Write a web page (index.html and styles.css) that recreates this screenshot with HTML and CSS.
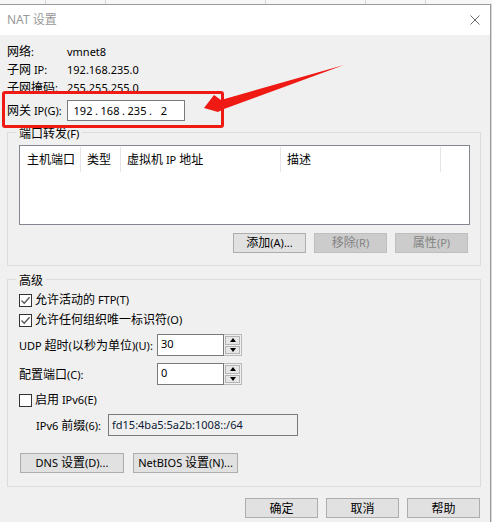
FILE: index.html
```html
<!DOCTYPE html>
<html lang="zh-CN">
<head>
<meta charset="utf-8">
<title>NAT 设置</title>
<link rel="stylesheet" href="styles.css">
</head>
<body>
<div class="screen">
  <div class="topstrip">
    <div class="ts-gap"></div>
    <div class="ts-cell w60"></div>
    <div class="ts-cell w160"></div>
    <div class="ts-cell w100"></div>
    <div class="ts-cell w60"></div>
    <div class="ts-cell rest"></div>
  </div>
  <div class="main">
    <div class="dialog">
      <div class="titlebar">
        <span class="title">NAT 设置</span>
        <svg class="close" width="10" height="10" viewBox="0 0 10 10"><path d="M0.5 0.5L9.5 9.5M9.5 0.5L0.5 9.5" stroke="#6d6d6d" stroke-width="1" fill="none"/></svg>
      </div>
      <div class="body">
        <div class="info">
          <span><span class="z">网络</span>:</span><span>vmnet8</span>
          <span><span class="z">子网</span> IP:</span><span>192.168.235.0</span>
          <span><span class="z">子网掩码</span>:</span><span>255.255.255.0</span>
        </div>
        <div class="gwrow">
          <span class="gwlabel"><span class="z">网关</span> IP(G):</span>
          <div class="ipbox">
            <span class="oct">192</span><span class="dot">.</span><span class="oct">168</span><span class="dot">.</span><span class="oct">235</span><span class="dot">.</span><span class="oct">2</span>
          </div>
        </div>

        <div class="group g1">
          <span class="gtitle"><span class="z">端口转发</span>(F)</span>
          <div class="listview">
            <div class="lvhead">
              <span class="col c1"><span class="z">主机端口</span></span>
              <span class="col c2"><span class="z">类型</span></span>
              <span class="col c3"><span class="z">虚拟机</span> IP <span class="z">地址</span></span>
              <span class="col c4"><span class="z">描述</span></span>
            </div>
          </div>
          <div class="btnrow">
            <span class="btn"><span><span class="z">添加</span>(A)...</span></span>
            <span class="btn disabled"><span><span class="z">移除</span>(R)</span></span>
            <span class="btn disabled"><span><span class="z">属性</span>(P)</span></span>
          </div>
        </div>

        <div class="group g2">
          <span class="gtitle"><span class="z">高级</span></span>
          <div class="checkrow first">
            <span class="cb"><svg width="11" height="11" viewBox="0 0 11 11"><path d="M1.5 5.5L4.2 8.2L9.6 2.2" stroke="#555" stroke-width="1.3" fill="none"/></svg></span>
            <span><span class="z">允许活动的</span> FTP(T)</span>
          </div>
          <div class="checkrow">
            <span class="cb"><svg width="11" height="11" viewBox="0 0 11 11"><path d="M1.5 5.5L4.2 8.2L9.6 2.2" stroke="#555" stroke-width="1.3" fill="none"/></svg></span>
            <span><span class="z">允许任何组织唯一标识符</span>(O)</span>
          </div>
          <div class="fieldrow udp">
            <span class="flabel">UDP <span class="z">超时</span>(<span class="z">以秒为单位</span>)(U):</span>
            <div class="spin">
              <span class="spintext">30</span>
              <span class="spinbtns"><span class="sb"><i class="up"></i></span><span class="sb"><i class="down"></i></span></span>
            </div>
          </div>
          <div class="fieldrow cfg">
            <span class="flabel"><span class="z">配置端口</span>(C):</span>
            <div class="spin">
              <span class="spintext">0</span>
              <span class="spinbtns"><span class="sb"><i class="up"></i></span><span class="sb"><i class="down"></i></span></span>
            </div>
          </div>
          <div class="checkrow v6">
            <span class="cb"></span>
            <span><span class="z">启用</span> IPv6(E)</span>
          </div>
          <div class="fieldrow prefix">
            <span class="plabel">IPv6 <span class="z">前缀</span>(6):</span>
            <span class="pinput">fd15:4ba5:5a2b:1008::/64</span>
          </div>
          <div class="btnrow2">
            <span class="btn dns"><span>DNS <span class="z">设置</span>(D)...</span></span>
            <span class="btn nb"><span>NetBIOS <span class="z">设置</span>(N)...</span></span>
          </div>
        </div>

        <div class="footer">
          <span class="btn"><span class="z">确定</span></span>
          <span class="btn"><span class="z">取消</span></span>
          <span class="btn"><span class="z">帮助</span></span>
        </div>
      </div>
    </div>
    <div class="side"></div>
  </div>

  <div class="redbox"></div>
  <svg class="arrow" width="492" height="522" viewBox="0 0 492 522">
    <polygon points="204,108 214,95 221,100 344,65 224,109 218,112" fill="#f01a14"/>
  </svg>
</div>
</body>
</html>
```
FILE: styles.css
```css
* { box-sizing: border-box; }
html, body {
  margin: 0;
  padding: 0;
  width: 492px;
  height: 522px;
  overflow: hidden;
  background: #f0f0f0;
}
body {
  font-family: "Noto Sans", "Noto Sans CJK SC", sans-serif;
  font-size: 11px;
  color: #000;
}
.z {
  font-family: "Noto Sans CJK SC", sans-serif;
  font-size: 12px;
  line-height: 1;
}
.screen {
  position: relative;
  width: 492px;
  height: 522px;
  overflow: hidden;
}
.topstrip {
  display: flex;
  height: 4px;
  background: #f7f7f7;
}
.ts-gap { width: 45px; }
.ts-cell { border-left: 1px solid #d6d6d6; }
.w60 { width: 60px; }
.w160 { width: 160px; }
.w100 { width: 100px; }
.rest { flex: 1; }

.main { display: flex; }
.dialog {
  width: 491px;
  border-top: 1px solid #9a9a9a;
  border-right: 1px solid #9a9a9a;
  background: #f0f0f0;
  height: 518px;
}
.side {
  width: 1px;
  background: #d9d9d9;
}
.titlebar {
  height: 30px;
  background: #fff;
  display: flex;
  align-items: center;
  justify-content: space-between;
  padding: 0 10px 0 7px;
}
.title {
  font-size: 12px;
  color: #999;
  line-height: 16px;
}
.close { display: block; }

.body {
  padding: 8px 9px 0 7px;
  display: flex;
  flex-direction: column;
}
.info {
  display: grid;
  grid-template-columns: 60px auto;
  grid-auto-rows: 18px;
  line-height: 18px;
}
.gwrow {
  display: flex;
  align-items: center;
  margin-top: 3px;
  height: 21px;
}
.gwlabel { width: 60px; white-space: nowrap; }
.ipbox {
  width: 118px;
  height: 21px;
  border: 1px solid #7a7a7a;
  background: #fff;
  display: flex;
  align-items: center;
  padding-left: 5px;
  line-height: 19px;
}
.oct { width: 20px; text-align: center; }
.dot { width: 7px; text-align: center; }

.group {
  border: 1px solid #dcdcdc;
  display: flex;
  flex-direction: column;
  padding: 0 10px 0 11px;
}
.gtitle {
  align-self: flex-start;
  margin: -6px 0 0 -3px;
  padding: 0 3px;
  height: 14px;
  line-height: 14px;
  background: #f0f0f0;
}
.g1 {
  margin-top: 11px;
  padding-bottom: 12px;
}
.listview {
  margin-top: 4px;
  height: 80px;
  border: 1px solid #828790;
  background: #fff;
}
.lvhead { display: flex; height: 27px; }
.col {
  margin-top: 1px;
  height: 25px;
  line-height: 25px;
  border-right: 1px solid #e5e5e5;
  padding-left: 6px;
  white-space: nowrap;
}
.c1 { width: 61px; padding-left: 7px; }
.c2 { width: 40px; }
.c3 { width: 160px; }
.c4 { width: 160px; }
.btnrow {
  display: flex;
  justify-content: flex-end;
  gap: 8px;
  margin-top: 8px;
  padding-right: 2px;
}
.btn {
  width: 73px;
  height: 20px;
  border: 1px solid #adadad;
  background: #e1e1e1;
  display: flex;
  align-items: center;
  justify-content: center;
  line-height: 18px;
  white-space: nowrap;
}
.btn.disabled {
  background: #cccccc;
  border-color: #bfbfbf;
  color: #838383;
}

.g2 {
  margin-top: 13px;
  padding-bottom: 13px;
}
.checkrow {
  display: flex;
  align-items: center;
  gap: 3px;
  height: 20px;
  line-height: 16px;
}
.checkrow.first { margin-top: 2px; }
.cb {
  width: 13px;
  height: 13px;
  border: 1px solid #333;
  background: #fff;
  display: flex;
}
.cb svg { display: block; }
.fieldrow {
  display: flex;
  align-items: center;
  height: 22px;
}
.udp { margin-top: 4px; }
.cfg { margin-top: 7px; }
.v6 { margin-top: 5px; }
.flabel { width: 138px; white-space: nowrap; }
.spin {
  display: flex;
  width: 85px;
  height: 22px;
}
.spintext {
  flex: 1;
  border: 1px solid #7a7a7a;
  background: #fff;
  padding-left: 3px;
  line-height: 18px;
}
.spinbtns {
  width: 18px;
  border: 1px solid #b9b9b9;
  border-left: none;
  background: #f0f0f0;
  display: flex;
  flex-direction: column;
  gap: 1px;
  padding: 1px;
}
.sb {
  flex: 1;
  border: 1px solid #b4b4b4;
  background: #e6e6e6;
  display: flex;
  align-items: center;
  justify-content: center;
}
.up, .down {
  width: 0;
  height: 0;
  border-left: 3.5px solid transparent;
  border-right: 3.5px solid transparent;
}
.up { border-bottom: 4px solid #000; }
.down { border-top: 4px solid #000; }
.prefix {
  margin-top: 4px;
  padding-left: 17px;
}
.plabel { width: 72px; white-space: nowrap; }
.pinput {
  width: 190px;
  height: 22px;
  border: 1px solid #7a7a7a;
  background: #f0f0f0;
  padding-left: 3px;
  line-height: 19px;
  color: #0c1a33;
}
.btnrow2 {
  display: flex;
  gap: 9px;
  margin-top: 17px;
  padding-left: 1px;
}
.dns { width: 104px; }
.nb { width: 105px; }

.footer {
  display: flex;
  justify-content: flex-end;
  gap: 8px;
  margin-top: 11px;
  padding-right: 1px;
}

.redbox {
  position: absolute;
  left: 2px;
  top: 91px;
  width: 222px;
  height: 37px;
  border: 3px solid #f01a14;
  border-radius: 3px;
}
.arrow {
  position: absolute;
  left: 0;
  top: 0;
}
```
